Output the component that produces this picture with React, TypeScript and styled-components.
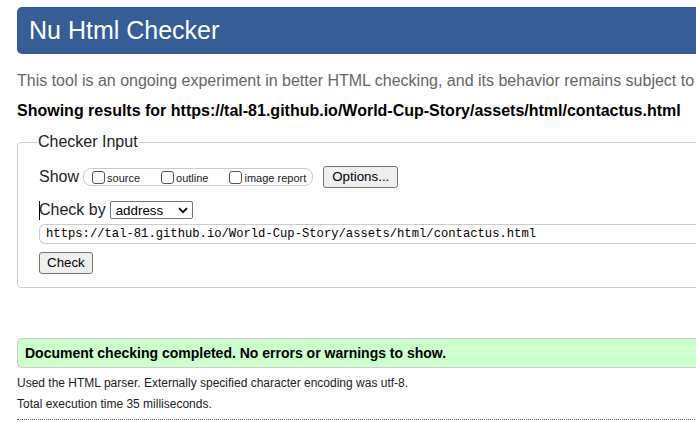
import React from "react";
import styled, { createGlobalStyle } from "styled-components";

const Global = createGlobalStyle`
  html, body { margin: 0; padding: 0; background: #fff; overflow: hidden; }
  body { width: 696px; height: 422px; font-family: "Liberation Sans", Arial, sans-serif; color: #000; }
`;

const Page = styled.div`
  width: 1100px;
  padding: 7px 0 0 17px;
  display: flex;
  flex-direction: column;
`;

const Header = styled.header`
  height: 47px;
  background: #365d95;
  border-radius: 5px 0 0 5px;
  padding-left: 12px;
  color: #fff;
  font-size: 25px;
  line-height: 47px;
`;

const Intro = styled.p`
  margin: 17px 0 0;
  white-space: nowrap;
  font-size: 16px;
  line-height: 20px;
  color: #666;
`;

const ResultsFor = styled.p`
  margin: 10px 0 0;
  font-size: 16px;
  line-height: 20px;
  font-weight: bold;
`;

const Fieldset = styled.fieldset`
  margin: 11px 0 0;
  border: 1px solid #ccc;
  border-radius: 4px 0 0 4px;
  padding: 14px 0 13px 21px;
  min-width: 0;
`;

const Legend = styled.legend`
  margin-left: -2px;
  padding: 0 1px;
  font-size: 16px;
  line-height: 20px;
  color: #222;
`;

const Row = styled.div<{ $gap?: number }>`
  display: flex;
  align-items: center;
  margin-top: ${(p) => p.$gap ?? 0}px;
`;

const Label = styled.span`
  font-size: 16px;
  line-height: 20px;
  color: #222;
  margin-right: 4px;
`;

const Caret = styled.span`
  display: inline-block;
  width: 1px;
  height: 19px;
  background: #000;
  margin-right: -1px;
`;

const Pill = styled.span`
  display: inline-flex;
  align-items: center;
  height: 16px;
  border: 1px solid #ccc;
  border-radius: 8px;
  padding: 0 6px 0 7px;
`;

const Option = styled.label<{ $last?: boolean }>`
  display: inline-flex;
  align-items: flex-end;
  font-size: 11px;
  line-height: 12px;
  color: #222;
  margin-right: ${(p) => (p.$last ? 0 : 20)}px;
`;

const Box = styled.span`
  display: inline-block;
  box-sizing: border-box;
  width: 13px;
  height: 13px;
  border: 1px solid #555;
  border-radius: 3px;
  background: #fff;
  margin: 0 2px 0 1px;
`;

const Button = styled.button`
  font-family: "Liberation Sans", Arial, sans-serif;
  font-size: 13.33px;
  line-height: 15px;
  color: #000;
  background: #efefef;
  border: 1px solid #767676;
  border-radius: 3px;
  padding: 2px 7px 3px;
  cursor: default;
`;

const OptionsButton = styled(Button)`
  margin-left: 10px;
  padding: 2px 8px 3px;
`;

const Select = styled.span`
  display: inline-flex;
  align-items: center;
  justify-content: space-between;
  box-sizing: border-box;
  width: 83px;
  height: 18px;
  border: 1px solid #767676;
  border-radius: 2px;
  padding: 0 4px 0 5px;
  font-size: 13.33px;
  color: #000;
`;

const UrlBox = styled.div`
  margin-top: 4px;
  box-sizing: border-box;
  height: 20px;
  border: 1px solid #ccc;
  border-radius: 6px 0 0 6px;
  border-right: none;
  padding-left: 6px;
  font-family: "Liberation Mono", "DejaVu Sans Mono", monospace;
  font-size: 12.2px;
  line-height: 19px;
  color: #000;
`;

const CheckButton = styled(Button)`
  align-self: flex-start;
  margin-top: 8px;
`;

const Inner = styled.div`
  display: flex;
  flex-direction: column;
`;

const Success = styled.div`
  margin-top: 50px;
  border: 1px solid #ccc;
  border-right: none;
  border-radius: 5px 0 0 5px;
  background: #ccffcc;
  padding: 5px 0 4px 7px;
  font-size: 14px;
  line-height: 19px;
  font-weight: bold;
`;

const Note = styled.p<{ $gap: number }>`
  margin: ${(p) => p.$gap}px 0 0;
  font-size: 12px;
  line-height: 16px;
  color: #222;
`;

const Rule = styled.hr`
  margin: 7px 0 0;
  border: none;
  border-top: 1px dotted #666;
  height: 0;
`;

const Chevron = () => (
  <svg width="10" height="7" viewBox="0 0 10 7">
    <path d="M1 1.2 L5 5.2 L9 1.2" fill="none" stroke="#000" strokeWidth="1.8" />
  </svg>
);

export default function App() {
  return (
    <>
      <Global />
      <Page>
        <Header>Nu Html Checker</Header>
        <Intro>This tool is an ongoing experiment in better HTML checking, and its behavior remains subject to</Intro>
        <ResultsFor>Showing results for https://tal-81.github.io/World-Cup-Story/assets/html/contactus.html</ResultsFor>
        <Fieldset>
          <Legend>Checker Input</Legend>
          <Inner>
            <Row>
              <Label>Show</Label>
              <Pill>
                <Option><Box />source</Option>
                <Option><Box />outline</Option>
                <Option $last><Box />image report</Option>
              </Pill>
              <OptionsButton>Options...</OptionsButton>
            </Row>
            <Row $gap={12}>
              <Caret />
              <Label>Check by</Label>
              <Select>
                address
                <Chevron />
              </Select>
            </Row>
            <UrlBox>https://tal-81.github.io/World-Cup-Story/assets/html/contactus.html</UrlBox>
            <CheckButton>Check</CheckButton>
          </Inner>
        </Fieldset>
        <Success>Document checking completed. No errors or warnings to show.</Success>
        <Note $gap={7}>Used the HTML parser. Externally specified character encoding was utf-8.</Note>
        <Note $gap={5}>Total execution time 35 milliseconds.</Note>
        <Rule />
      </Page>
    </>
  );
}
